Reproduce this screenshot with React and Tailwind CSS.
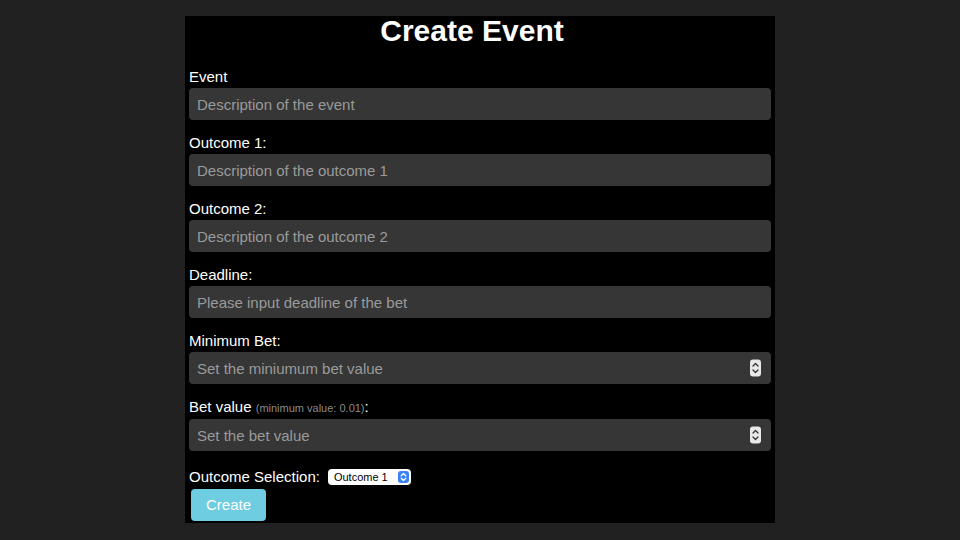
import React from 'react';

function Spinner() {
  return (
    <span className="absolute right-[10px] top-1/2 -translate-y-1/2 w-[11px] h-[17px] rounded-[3px] bg-[#e8e8e8] flex flex-col items-center justify-center">
      <svg width="7" height="13" viewBox="0 0 7 13" fill="none" stroke="#333" strokeWidth="1.3" strokeLinecap="round" strokeLinejoin="round">
        <path d="M1 4.5 L3.5 2 L6 4.5" />
        <path d="M1 8.5 L3.5 11 L6 8.5" />
      </svg>
    </span>
  );
}

function Field({ label, placeholder, number }) {
  return (
    <div className="mb-[13px]">
      <label className="block text-[15px] leading-[18px] pt-[1px] mb-[2px] text-white">{label}</label>
      <div className="relative">
        <input
          type="text"
          placeholder={placeholder}
          className="w-full h-[32px] rounded-[4px] bg-[#363636] px-2 text-[15px] text-white placeholder:text-[#9a9a9a] outline-none"
        />
        {number && <Spinner />}
      </div>
    </div>
  );
}

export default function App() {
  return (
    <div className="min-h-screen bg-[#212121] flex justify-center pt-4" style={{ fontFamily: '"Liberation Sans", Arial, sans-serif' }}>
      <div className="w-[590px] h-[507px] bg-black px-1 pb-[2px]">
        {/* Title */}
        <h1 className="text-white font-bold text-[30px] leading-[30px] text-center pr-4 mb-[21px]">Create Event</h1>

        <Field label="Event" placeholder="Description of the event" />
        <Field label="Outcome 1:" placeholder="Description of the outcome 1" />
        <Field label="Outcome 2:" placeholder="Description of the outcome 2" />
        <Field label="Deadline:" placeholder="Please input deadline of the bet" />
        <Field label="Minimum Bet:" placeholder="Set the miniumum bet value" number />
        <Field
          label={
            <>
              Bet value <span className="text-[11px] text-[#8a8a8a]">(minimum value: 0.01)</span>:
            </>
          }
          placeholder="Set the bet value"
          number
        />

        {/* Outcome selection */}
        <div className="flex items-center h-[20px] mt-[16px]">
          <span className="text-white text-[15px] leading-[18px]">Outcome Selection:</span>
          <div className="ml-[8px] w-[83px] h-[16px] bg-white rounded-[4px] flex items-center justify-between pl-[6px] pr-[2px]">
            <span className="text-[11px] leading-[14px] text-black">Outcome 1</span>
            <span className="w-[11px] h-[12px] rounded-[3px] bg-[#3b82f6] flex items-center justify-center">
              <svg width="7" height="10" viewBox="0 0 7 10" fill="none" stroke="white" strokeWidth="1.3" strokeLinecap="round" strokeLinejoin="round">
                <path d="M1.2 3.8 L3.5 1.5 L5.8 3.8" />
                <path d="M1.2 6.2 L3.5 8.5 L5.8 6.2" />
              </svg>
            </span>
          </div>
        </div>

        <button className="mt-[2px] ml-[2px] w-[75px] h-[32px] rounded-[4px] bg-[#6ecde0] text-white text-[15px] pt-[1px]">Create</button>
      </div>
    </div>
  );
}
